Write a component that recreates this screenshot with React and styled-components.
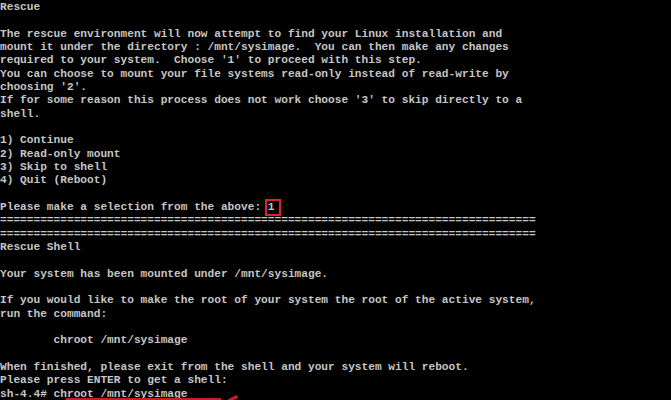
import React from "react";
import styled, { createGlobalStyle } from "styled-components";

const GlobalStyle = createGlobalStyle`
  html, body {
    margin: 0;
    padding: 0;
    background: #000;
  }
`;

const lines = [
  "Rescue",
  "",
  "The rescue environment will now attempt to find your Linux installation and",
  "mount it under the directory : /mnt/sysimage.  You can then make any changes",
  "required to your system.  Choose '1' to proceed with this step.",
  "You can choose to mount your file systems read-only instead of read-write by",
  "choosing '2'.",
  "If for some reason this process does not work choose '3' to skip directly to a",
  "shell.",
  "",
  "1) Continue",
  "2) Read-only mount",
  "3) Skip to shell",
  "4) Quit (Reboot)",
  "",
  "SELECT",
  "================================================================================",
  "================================================================================",
  "Rescue Shell",
  "",
  "Your system has been mounted under /mnt/sysimage.",
  "",
  "If you would like to make the root of your system the root of the active system,",
  "run the command:",
  "",
  "        chroot /mnt/sysimage",
  "",
  "When finished, please exit from the shell and your system will reboot.",
  "Please press ENTER to get a shell:",
  "PROMPT",
];

const Screen = styled.div`
  width: 671px;
  height: 400px;
  overflow: hidden;
  background: #000;
  color: #c6c6c6;
  font-family: "Liberation Mono", "DejaVu Sans Mono", monospace;
  font-size: 11.17px;
  font-weight: bold;
  padding-top: 1px;
  box-sizing: border-box;
`;

const Line = styled.div`
  height: 13.34px;
  line-height: 13.34px;
  white-space: pre;
  position: relative;
`;

// red annotation box around the typed choice
const Selected = styled.span`
  position: relative;
  &::after {
    content: "";
    position: absolute;
    left: -3px;
    right: -6px;
    top: -2px;
    bottom: -3px;
    border: 2px solid #d8262a;
  }
`;

// red annotation underline under the command (cut off by the screen edge)
const Marked = styled.span`
  position: relative;
  &::after {
    content: "";
    position: absolute;
    left: 12px;
    width: 155px;
    top: 10px;
    height: 3px;
    background: #c81e22;
  }
`;

const Arrow = styled.span`
  position: absolute;
  left: 228px;
  top: 9px;
  width: 10px;
  height: 3px;
  background: #c81e22;
  transform: rotate(-25deg);
`;

export default function App() {
  return (
    <>
      <GlobalStyle />
      <Screen>
        {lines.map((text, i) => {
          if (text === "SELECT") {
            return (
              <Line key={i}>
                Please make a selection from the above: <Selected>1</Selected>
              </Line>
            );
          }
          if (text === "PROMPT") {
            return (
              <Line key={i}>
                sh-4.4# <Marked>chroot /mnt/sysimage</Marked>
                <Arrow />
              </Line>
            );
          }
          return <Line key={i}>{text}</Line>;
        })}
      </Screen>
    </>
  );
}
